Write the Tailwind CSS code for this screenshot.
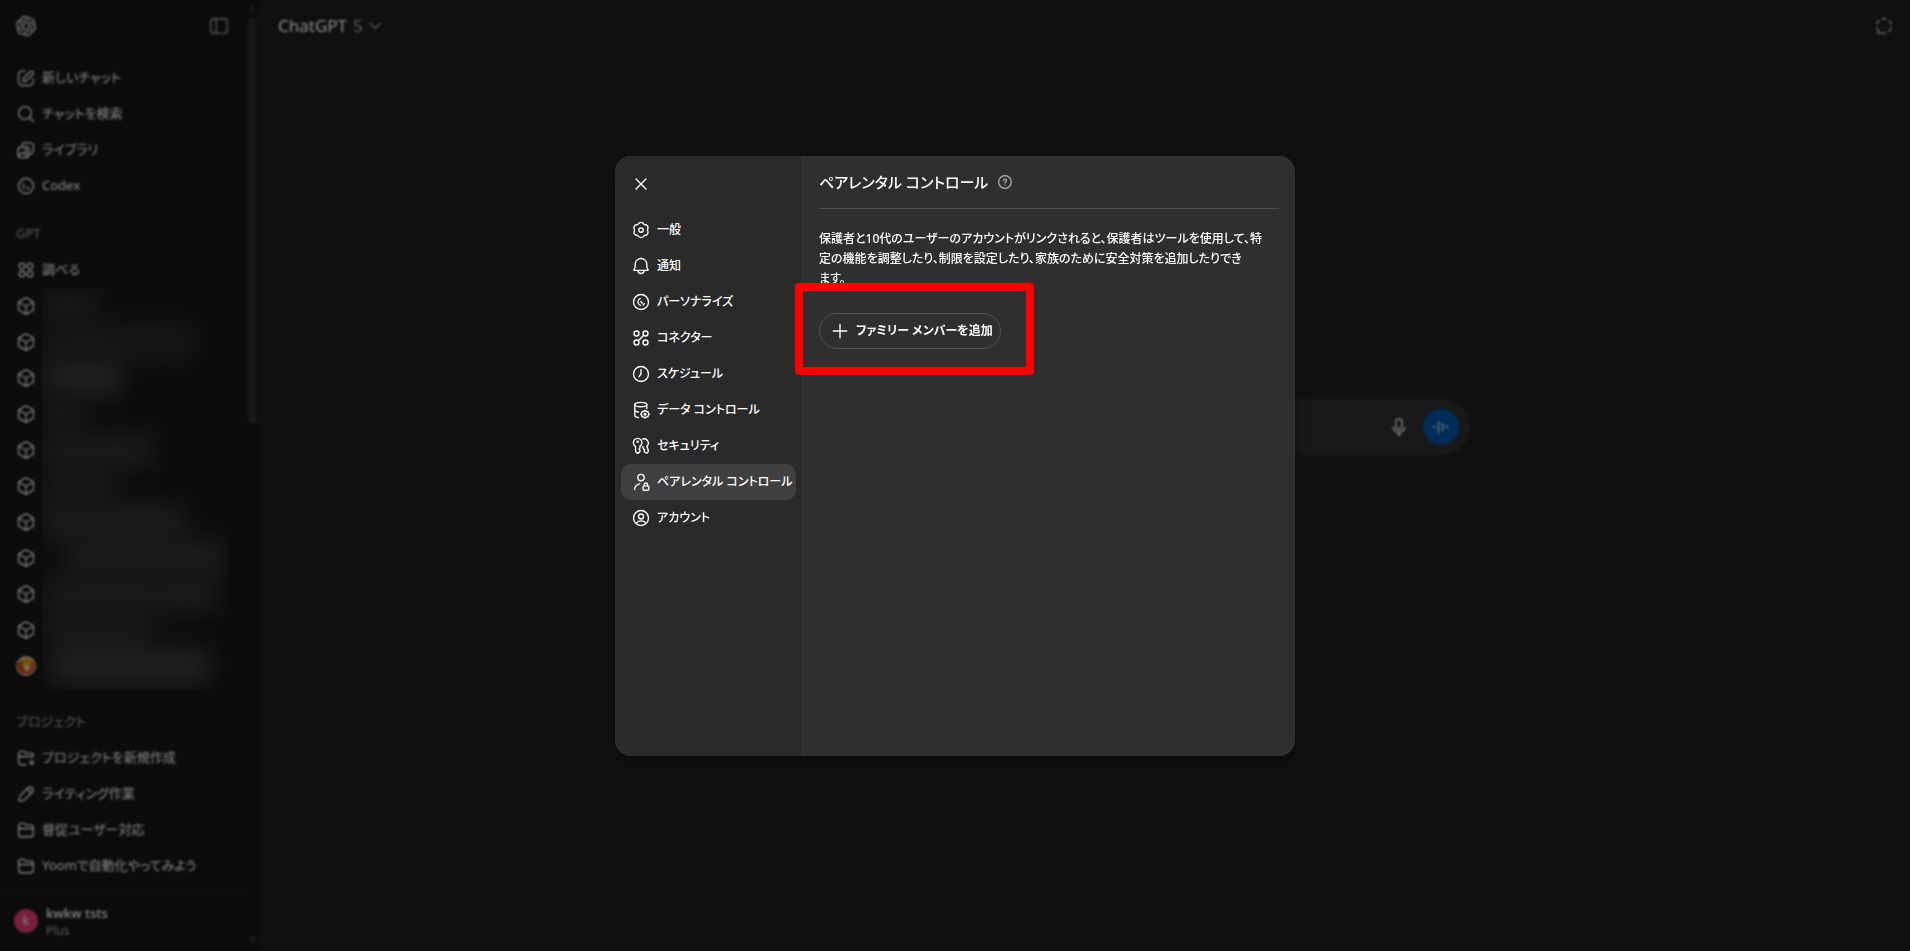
<!DOCTYPE html>
<html lang="ja">
<head>
    <meta charset="UTF-8">
    <meta name="viewport" content="width=device-width, initial-scale=1.0">
    <title>ChatGPT</title>
    <script src="https://cdn.jsdelivr.net/npm/@tailwindcss/browser@4"></script>
</head>
<body class="h-screen overflow-hidden bg-[#212121] text-[13px] text-white font-['Noto_Sans','Noto_Sans_CJK_JP',sans-serif] [font-feature-settings:'palt']">

    <!-- icons -->
    <svg class="hidden" fill="none" stroke="currentColor" stroke-width="1.35" stroke-linecap="round" stroke-linejoin="round">
        <symbol id="i-cube" viewBox="0 0 20 20"><path d="M9.200 2.100a1.700 1.700 0 0 1 1.600 0l5.700 3.200a1.700 1.700 0 0 1 .9 1.500v6.400a1.700 1.700 0 0 1-.9 1.500l-5.700 3.200a1.700 1.700 0 0 1-1.600 0l-5.700-3.200a1.700 1.700 0 0 1-.9-1.500V6.800a1.700 1.700 0 0 1 .9-1.500zM3.200 6.500 10 10l6.800-3.500M10 10v7.500"/></symbol>
        <symbol id="i-folder" viewBox="0 0 20 20"><path d="M2.700 8.500h14.600M2.700 5.600a2.300 2.300 0 0 1 2.300-2.300h2.200c.7 0 1.300.3 1.800.8l.3.300c.4.400 1 .7 1.700.7h4a2.300 2.300 0 0 1 2.300 2.300v6.600a2.700 2.700 0 0 1-2.700 2.700H5.400a2.700 2.700 0 0 1-2.700-2.700z"/></symbol>
    </svg>

    <div class="flex h-full">
        <aside class="relative flex w-[259px] shrink-0 flex-col bg-[#181818]">
            <div class="flex h-[52px] items-center justify-between pl-4 pr-[30px]">
                <a href="#" aria-label="ChatGPT">
                    <svg class="size-5" viewBox="0 0 24 24" fill="currentColor"><path d="M22.2819 9.8211a5.9847 5.9847 0 0 0-.5157-4.9108 6.0462 6.0462 0 0 0-6.5098-2.9A6.0651 6.0651 0 0 0 4.9807 4.1818a5.9847 5.9847 0 0 0-3.9977 2.9 6.0462 6.0462 0 0 0 .7427 7.0966 5.98 5.98 0 0 0 .511 4.9107 6.051 6.051 0 0 0 6.5146 2.9001A5.9847 5.9847 0 0 0 13.2599 24a6.0557 6.0557 0 0 0 5.7718-4.2058 5.9894 5.9894 0 0 0 3.9977-2.9001 6.0557 6.0557 0 0 0-.7475-7.0729zm-9.022 12.6081a4.4755 4.4755 0 0 1-2.8764-1.0408l.1419-.0804 4.7783-2.7582a.7948.7948 0 0 0 .3927-.6813v-6.7369l2.02 1.1686a.071.071 0 0 1 .038.052v5.5826a4.504 4.504 0 0 1-4.4945 4.4944zm-9.6607-4.1254a4.4708 4.4708 0 0 1-.5346-3.0137l.142.0852 4.783 2.7582a.7712.7712 0 0 0 .7806 0l5.8428-3.3685v2.3324a.0804.0804 0 0 1-.0332.0615L9.74 19.9502a4.4992 4.4992 0 0 1-6.1408-1.6464zM2.3408 7.8956a4.485 4.485 0 0 1 2.3655-1.9728V11.6a.7664.7664 0 0 0 .3879.6765l5.8144 3.3543-2.0201 1.1685a.0757.0757 0 0 1-.071 0l-4.8303-2.7865A4.504 4.504 0 0 1 2.3408 7.872zm16.5963 3.8558L13.1038 8.364 15.1192 7.2a.0757.0757 0 0 1 .071 0l4.8303 2.7913a4.4944 4.4944 0 0 1-.6765 8.1042v-5.6772a.79.79 0 0 0-.407-.667zm2.0107-3.0231l-.142-.0852-4.7735-2.7818a.7759.7759 0 0 0-.7854 0L9.409 9.2297V6.8974a.0662.0662 0 0 1 .0284-.0615l4.8303-2.7866a4.4992 4.4992 0 0 1 6.6802 4.66zM8.3065 12.863l-2.02-1.1638a.0804.0804 0 0 1-.038-.0567V6.0742a4.4992 4.4992 0 0 1 7.3757-3.4537l-.142.0805L8.704 5.459a.7948.7948 0 0 0-.3927.6813zm1.0976-2.3654l2.602-1.4998 2.6069 1.4998v2.9994l-2.5974 1.4997-2.6067-1.4997Z"/></svg>
                </a>
                <button aria-label="サイドバーを閉じる" class="text-[#afafaf]">
                    <svg class="size-5" viewBox="0 0 20 20" fill="none" stroke="currentColor" stroke-width="1.35"><rect x="1.700" y="2.700" width="16.600" height="14.600" rx="3.200"/><path d="M7.300 2.700v14.600"/></svg>
                </button>
            </div>

            <nav class="flex-1 overflow-hidden pl-4 pt-2">
                <a href="#" class="flex h-9 items-center gap-1.5">
                    <svg class="size-5" viewBox="0 0 20 20" fill="none" stroke="currentColor" stroke-width="1.35" stroke-linecap="round" stroke-linejoin="round"><path d="M9.300 2.800H6.500a4 4 0 0 0-4 4v6.700a4 4 0 0 0 4 4h6.700a4 4 0 0 0 4-4v-2.800M8 9.800l6-6a1.900 1.900 0 0 1 2.700 2.700l-6 6c-.7.7-1.600 1-3.500 1 0-1.800.2-3 .8-3.700z"/></svg>
                    新しいチャット
                </a>
                <a href="#" class="flex h-9 items-center gap-1.5">
                    <svg class="size-5" viewBox="0 0 20 20" fill="none" stroke="currentColor" stroke-width="1.35" stroke-linecap="round"><circle cx="9" cy="9" r="6.400"/><path d="m13.700 13.700 3.600 3.600"/></svg>
                    チャットを検索
                </a>
                <a href="#" class="flex h-9 items-center gap-1.5">
                    <svg class="size-5" viewBox="0 0 20 20" fill="none" stroke="currentColor" stroke-width="1.35" stroke-linecap="round" stroke-linejoin="round"><rect x="2" y="7" width="11" height="10.600" rx="3"/><path d="M6 5.200c.3-1.800 1.400-2.800 3.300-2.600l5.600.6c1.900.2 2.900 1.400 2.700 3.200l-.6 5.200c-.2 1.500-1 2.400-2.300 2.600M3 15.500l2.200-2.300c.7-.7 1.500-.7 2.200 0l4.100 4M9.300 12.700c1-.6 2.200-.3 3.500.8"/><circle cx="9.500" cy="10" r=".5"/></svg>
                    ライブラリ
                </a>
                <a href="#" class="flex h-9 items-center gap-1.5">
                    <svg class="size-5" viewBox="0 0 20 20" fill="none" stroke="currentColor" stroke-width="1.35" stroke-linecap="round" stroke-linejoin="round"><circle cx="10" cy="10" r="7.500"/><path d="m6.800 7.500 1.500 2.500-1.500 2.500M10.700 12.200h2.600"/></svg>
                    Codex
                </a>

                <h2 class="mt-3 flex h-9 items-center text-[#afafaf]">GPT</h2>
                <a href="#" class="flex h-9 items-center gap-1.5">
                    <svg class="size-5" viewBox="0 0 20 20" fill="none" stroke="currentColor" stroke-width="1.35"><circle cx="6" cy="6" r="2.800"/><circle cx="14" cy="6" r="2.800"/><circle cx="6" cy="14" r="2.800"/><circle cx="14" cy="14" r="2.800"/></svg>
                    調べる
                </a>
                <div class="flex gap-1.5">
                    <ul>
                        <li class="flex h-9 items-center"><svg class="size-5" fill="none" stroke="currentColor" stroke-width="1.350"><use href="#i-cube"/></svg></li>
                        <li class="flex h-9 items-center"><svg class="size-5" fill="none" stroke="currentColor" stroke-width="1.350"><use href="#i-cube"/></svg></li>
                        <li class="flex h-9 items-center"><svg class="size-5" fill="none" stroke="currentColor" stroke-width="1.350"><use href="#i-cube"/></svg></li>
                        <li class="flex h-9 items-center"><svg class="size-5" fill="none" stroke="currentColor" stroke-width="1.350"><use href="#i-cube"/></svg></li>
                        <li class="flex h-9 items-center"><svg class="size-5" fill="none" stroke="currentColor" stroke-width="1.350"><use href="#i-cube"/></svg></li>
                        <li class="flex h-9 items-center"><svg class="size-5" fill="none" stroke="currentColor" stroke-width="1.350"><use href="#i-cube"/></svg></li>
                        <li class="flex h-9 items-center"><svg class="size-5" fill="none" stroke="currentColor" stroke-width="1.350"><use href="#i-cube"/></svg></li>
                        <li class="flex h-9 items-center"><svg class="size-5" fill="none" stroke="currentColor" stroke-width="1.350"><use href="#i-cube"/></svg></li>
                        <li class="flex h-9 items-center"><svg class="size-5" fill="none" stroke="currentColor" stroke-width="1.350"><use href="#i-cube"/></svg></li>
                        <li class="flex h-9 items-center"><svg class="size-5" fill="none" stroke="currentColor" stroke-width="1.350"><use href="#i-cube"/></svg></li>
                        <li class="flex h-9 items-center">
                            <svg class="size-5" viewBox="0 0 20 20"><circle cx="10" cy="10" r="10" fill="#e8d9c8"/><path d="M1 8a9.500 9.500 0 0 0 5 10l3-3V7L5 3z" fill="#d3481c"/><path d="M19 8a9.500 9.500 0 0 1-5 10l-2-4V7l4-3z" fill="#df5a1c"/><circle cx="10.500" cy="7" r="5" fill="#dcae18"/><circle cx="11" cy="11.500" r="3" fill="#efd59a"/><path d="M7 15h7v3H7z" fill="#d3481c"/></svg>
                        </li>
                    </ul>
                    <!-- hidden names -->
                    <div class="-mb-1.5 w-[186px] overflow-hidden">
                        <div class="flex h-9 items-center"><div class="h-9 w-14 bg-[#2f3130] blur-[12px]"></div></div>
                        <div class="flex h-9 items-center"><div class="h-9 w-38 bg-[#2d2e2c] blur-[12px]"></div></div>
                        <div class="flex h-9 items-center"><div class="h-9 w-20 bg-[#414140] blur-[12px]"></div></div>
                        <div class="flex h-9 items-center"><div class="h-9 w-10 bg-[#2e3130] blur-[12px]"></div></div>
                        <div class="flex h-9 items-center"><div class="h-9 w-28 bg-[#333534] blur-[12px]"></div></div>
                        <div class="flex h-9 items-center"><div class="h-9 w-18 bg-[#313332] blur-[12px]"></div></div>
                        <div class="flex h-9 items-center"><div class="h-9 w-36 bg-[#383839] blur-[12px]"></div></div>
                        <div class="flex h-9 items-center"><div class="ml-6 h-9 w-40 bg-[#393939] blur-[12px]"></div></div>
                        <div class="flex h-9 items-center"><div class="h-9 w-44 bg-[#333534] blur-[12px]"></div></div>
                        <div class="flex h-9 items-center"><div class="h-9 w-28 bg-[#333332] blur-[12px]"></div></div>
                        <div class="flex h-9 items-center"><div class="ml-2 h-9 w-40 bg-[#414141] blur-[12px]"></div></div>
                    </div>
                </div>

                <h2 class="mt-5 flex h-9 items-center text-[#afafaf]">プロジェクト</h2>
                <a href="#" class="flex h-9 items-center gap-1.5">
                    <svg class="size-5" viewBox="0 0 20 20" fill="none" stroke="currentColor" stroke-width="1.35" stroke-linecap="round" stroke-linejoin="round"><path d="M17.300 8.500H2.700M10 16.700H5.400A2.700 2.700 0 0 1 2.700 14V5.600A2.300 2.300 0 0 1 5 3.300h2.200c.7 0 1.300.3 1.800.8l.3.300c.4.400 1 .7 1.700.7h4a2.300 2.300 0 0 1 2.300 2.300v1.100M15.700 12v5M13.200 14.500h5"/></svg>
                    プロジェクトを新規作成
                </a>
                <a href="#" class="flex h-9 items-center gap-1.5">
                    <svg class="size-5" viewBox="0 0 20 20" fill="none" stroke="currentColor" stroke-width="1.35" stroke-linecap="round" stroke-linejoin="round"><path d="M3 17c0-3 .3-4.500 1.800-6l7-7a3 3 0 0 1 4.300 4.300l-7 7C7.600 16.800 6 17 3 17zM11 4.900l4.200 4.200"/></svg>
                    ライティング作業
                </a>
                <a href="#" class="flex h-9 items-center gap-1.5">
                    <svg class="size-5" fill="none" stroke="currentColor" stroke-width="1.350"><use href="#i-folder"/></svg>
                    督促ユーザー対応
                </a>
                <a href="#" class="flex h-9 items-center gap-1.5">
                    <svg class="size-5" fill="none" stroke="currentColor" stroke-width="1.350"><use href="#i-folder"/></svg>
                    Yoomで自動化やってみよう
                </a>
            </nav>

            <div class="mr-3.5 flex h-[61px] items-center gap-2 border-t border-[#2a2a2a] pl-3.5">
                <div class="flex size-6 items-center justify-center rounded-full bg-[#f0407c] text-xs">k</div>
                <div>
                    <div class="font-medium leading-5">kwkw tsts</div>
                    <div class="text-xs leading-4 text-[#afafaf]">Plus</div>
                </div>
            </div>

            <!-- scrollbar -->
            <div class="absolute inset-y-0 right-0.5 flex w-[9px] flex-col items-center pb-1.5 pt-1">
                <svg class="h-2 w-[9px]" viewBox="0 0 9 8" fill="#303030"><path d="M4.500 0 9 8H0z"/></svg>
                <div class="mt-1.5 h-[406px] w-full rounded-full bg-[#303030]"></div>
                <svg class="mt-auto h-2 w-[9px]" viewBox="0 0 9 8" fill="#303030"><path d="M4.500 8 9 0H0z"/></svg>
            </div>
        </aside>

        <main class="flex flex-1 flex-col">
            <header class="flex h-[52px] items-center justify-between pl-[19px] pr-4">
                <button class="flex items-center gap-1.5 text-[17px]">
                    <span>ChatGPT</span>
                    <span class="text-[#afafaf]">5</span>
                    <svg class="size-3" viewBox="0 0 12 12" fill="none" stroke="#afafaf" stroke-width="1.400" stroke-linecap="round" stroke-linejoin="round"><path d="m1 3.500 5 5 5-5"/></svg>
                </button>
                <button aria-label="一時チャット">
                    <svg class="size-5" viewBox="0 0 20 20" fill="none" stroke="#d0d0d0" stroke-width="1.500" stroke-linecap="round"><circle cx="10" cy="10" r="7.300" stroke-dasharray="3.600 4.040" stroke-dashoffset="-2"/><path d="M3 17h3.500"/></svg>
                </button>
            </header>
            <div class="mx-auto mt-[347px] flex h-14 w-full max-w-[770px] items-center justify-end gap-3.5 rounded-full bg-[#303030] pr-[11px]">
                <button aria-label="音声入力">
                    <svg class="size-5" viewBox="0 0 20 20" fill="none" stroke="currentColor" stroke-width="1.400" stroke-linecap="round"><rect x="7" y="1.700" width="6" height="10.300" rx="3"/><path d="M4 10.500a6.200 6.200 0 0 0 12 0M10 15v3M8.500 17.500h3"/></svg>
                </button>
                <button aria-label="音声モード" class="flex size-9 items-center justify-center rounded-full bg-[#0058b0] text-[#c4d4e4]">
                    <svg class="size-5" viewBox="0 0 20 20" fill="none" stroke="currentColor" stroke-width="1.800" stroke-linecap="round"><path d="M3.500 9.200v1.600M7.700 4.500v11M12 6.700v6.600M16.200 9.200v1.600"/></svg>
                </button>
            </div>
        </main>
    </div>

    <!-- settings dialog -->
    <div class="fixed inset-0 grid grid-rows-[minmax(20px,0.8fr)_auto_minmax(20px,1fr)] justify-center bg-black/50 backdrop-blur-[1px]">
        <div role="dialog" aria-modal="true" aria-labelledby="dialogTitle" class="row-start-2 flex h-[600px] w-[680px] max-w-screen rounded-2xl bg-[#2f2f2f] text-xs font-medium shadow-[0_8px_16px_rgba(0,0,0,0.32),inset_0_0_1px_rgba(255,255,255,0.2)]">
            <div class="w-[188px] shrink-0 rounded-l-2xl border-r border-[#363636] bg-[#2a2a2a] px-1.5 pt-2.5">
                <button aria-label="閉じる" class="mb-2.5 ml-0.5 flex size-9 items-center justify-center">
                    <svg class="size-5" viewBox="0 0 20 20" fill="none" stroke="currentColor" stroke-width="1.350" stroke-linecap="round"><path d="m5 5 10 10M15 5 5 15"/></svg>
                </button>
                <div role="tablist" class="flex w-[175px] flex-col">
                    <button role="tab" class="flex h-9 items-center gap-1.5 whitespace-nowrap rounded-lg px-2.5">
                        <svg class="size-5 shrink-0" viewBox="0 0 20 20" fill="none" stroke="currentColor" stroke-width="1.350" stroke-linejoin="round"><path d="M6.800 4.500C8.600 1.600 11.400 1.600 13.200 4.500C16.600 4.600 18 7 16.400 10C18 13 16.600 15.400 13.200 15.500C11.400 18.400 8.600 18.400 6.800 15.500C3.400 15.400 2 13 3.600 10C2 7 3.400 4.600 6.800 4.500z"/><circle cx="10" cy="10" r="2.200"/></svg>
                        一般
                    </button>
                    <button role="tab" class="flex h-9 items-center gap-1.5 whitespace-nowrap rounded-lg px-2.5">
                        <svg class="size-5 shrink-0" viewBox="0 0 20 20" fill="none" stroke="currentColor" stroke-width="1.350" stroke-linecap="round" stroke-linejoin="round"><path d="M10 2.500a5.800 5.800 0 0 0-5.800 5.600l-.1 3.400-1.100 2c-.2.400 0 .9.500.9h13c.5 0 .7-.5.500-.9l-1.100-2-.1-3.400A5.800 5.800 0 0 0 10 2.500zM7 14.500a3 3 0 0 0 6 0"/></svg>
                        通知
                    </button>
                    <button role="tab" class="flex h-9 items-center gap-1.5 whitespace-nowrap rounded-lg px-2.5">
                        <svg class="size-5 shrink-0" viewBox="0 0 20 20" fill="none" stroke="currentColor" stroke-width="1.350" stroke-linecap="round"><circle cx="10" cy="10" r="7.500"/><path d="M9.200 6.500c-3 1.400-3 5.600.2 6.800M10.200 9.300c-.2 1 .3 1.700 1.200 1.700M13.200 11.500c-.3.700-.7 1.200-1.200 1.600"/></svg>
                        パーソナライズ
                    </button>
                    <button role="tab" class="flex h-9 items-center gap-1.5 whitespace-nowrap rounded-lg px-2.5">
                        <svg class="size-5 shrink-0" viewBox="0 0 20 20" fill="none" stroke="currentColor" stroke-width="1.350" stroke-linecap="round"><circle cx="5.500" cy="5.500" r="2.500"/><circle cx="14.500" cy="5.500" r="2.500"/><circle cx="5.500" cy="14.500" r="2.500"/><circle cx="14.500" cy="14.500" r="2.500"/><path d="m7.500 12.500 5-5"/></svg>
                        コネクター
                    </button>
                    <button role="tab" class="flex h-9 items-center gap-1.5 whitespace-nowrap rounded-lg px-2.5">
                        <svg class="size-5 shrink-0" viewBox="0 0 20 20" fill="none" stroke="currentColor" stroke-width="1.350" stroke-linecap="round" stroke-linejoin="round"><circle cx="10" cy="10" r="7.500"/><path d="M10 5.700V10l-2 2.700"/></svg>
                        スケジュール
                    </button>
                    <button role="tab" class="flex h-9 items-center gap-1.5 whitespace-nowrap rounded-lg px-2.5">
                        <svg class="size-5 shrink-0" viewBox="0 0 20 20" fill="none" stroke="currentColor" stroke-width="1.350" stroke-linecap="round"><ellipse cx="9.800" cy="4.500" rx="6" ry="2.200"/><path d="M3.800 4.500v11c0 1 1.500 1.800 3.700 2.100M3.800 10c0 1 1.300 1.700 3.700 2M15.800 4.500v4"/><path d="m14 10.300 1.200 1.200h1.700l.4 1.600 1 1.100-1 1.100-.4 1.600h-1.700L14 18.100l-1.200-1.200h-1.700l-.4-1.600-1-1.100 1-1.100.4-1.600h1.700z" stroke-linejoin="round"/><circle cx="14" cy="14.200" r=".9"/></svg>
                        データ コントロール
                    </button>
                    <button role="tab" class="flex h-9 items-center gap-1.5 whitespace-nowrap rounded-lg px-2.5">
                        <svg class="size-5 shrink-0" viewBox="0 0 20 20" fill="none" stroke="currentColor" stroke-width="1.350" stroke-linecap="round" stroke-linejoin="round"><path d="M4.500 10.400a4.300 4.300 0 1 1 4.300 0l.3 1.400-1 1.300 1 1.300-.4 1.500-1.900 1.500-2.100-1.500z"/><circle cx="6.700" cy="5.800" r=".6"/><path d="M11.500 3.100a4.300 4.300 0 0 1 4.400 7.200l1.500 4.500-1 2.200-2.300-.3-1-1.500.6-1.400-1.300-.9-.6-2.200"/></svg>
                        セキュリティ
                    </button>
                    <button role="tab" aria-selected="true" class="flex h-9 items-center gap-1.5 whitespace-nowrap rounded-[10px] bg-[#404040] px-2.5">
                        <svg class="size-5 shrink-0" viewBox="0 0 20 20" fill="none" stroke="currentColor" stroke-width="1.350" stroke-linecap="round" stroke-linejoin="round"><circle cx="10" cy="5.500" r="3.200"/><path d="M3.500 17.300c.4-2.800 2.300-4.900 5.200-5.500"/><rect x="12" y="13.800" width="5.800" height="4.400" rx="1"/><path d="M13.300 13.800v-1.200a1.600 1.600 0 0 1 3.200 0v1.200"/></svg>
                        ペアレンタル コントロール
                    </button>
                    <button role="tab" class="flex h-9 items-center gap-1.5 whitespace-nowrap rounded-lg px-2.5">
                        <svg class="size-5 shrink-0" viewBox="0 0 20 20" fill="none" stroke="currentColor" stroke-width="1.350"><circle cx="10" cy="10" r="7.500"/><circle cx="10" cy="8.500" r="2.500"/><path d="M5 15.500c1-1.700 2.800-2.700 5-2.700s4 1 5 2.700"/></svg>
                        アカウント
                    </button>
                </div>
            </div>

            <div class="min-w-0 flex-1 px-4">
                <div class="flex h-[53px] items-center gap-2.5 border-b border-[#4f4f4f]">
                    <h1 id="dialogTitle" class="text-[15px]">ペアレンタル コントロール</h1>
                    <svg class="size-3.5" viewBox="0 0 14 14" fill="none" stroke="#b4b4b4" stroke-width="1.200" stroke-linecap="round"><circle cx="7" cy="7" r="6.300"/><path d="M5.500 5.600a1.500 1.500 0 1 1 2.300 1.200c-.5.300-.8.500-.8 1.100M7 9.800v.1"/></svg>
                </div>
                <p class="mt-5 whitespace-nowrap leading-5">
                    保護者と10代のユーザーのアカウントがリンクされると、保護者はツールを使用して、特<br>
                    定の機能を調整したり、制限を設定したり、家族のために安全対策を追加したりでき<br>
                    ます。
                </p>
                <div class="relative mt-6">
                    <button class="flex h-9 w-[182px] items-center gap-1.5 whitespace-nowrap rounded-full border border-[#505050] pl-2.5 font-bold">
                        <svg class="size-5 shrink-0" viewBox="0 0 20 20" fill="none" stroke="currentColor" stroke-width="1.350" stroke-linecap="round"><path d="M10 3.300v13.400M3.300 10h13.400"/></svg>
                        ファミリー メンバーを追加
                    </button>
                    <div class="pointer-events-none absolute -left-6 -top-[30px] h-[92px] w-[239px] rounded border-8 border-[#ff0000]"></div>
                </div>
            </div>
        </div>
    </div>

</body>
</html>
